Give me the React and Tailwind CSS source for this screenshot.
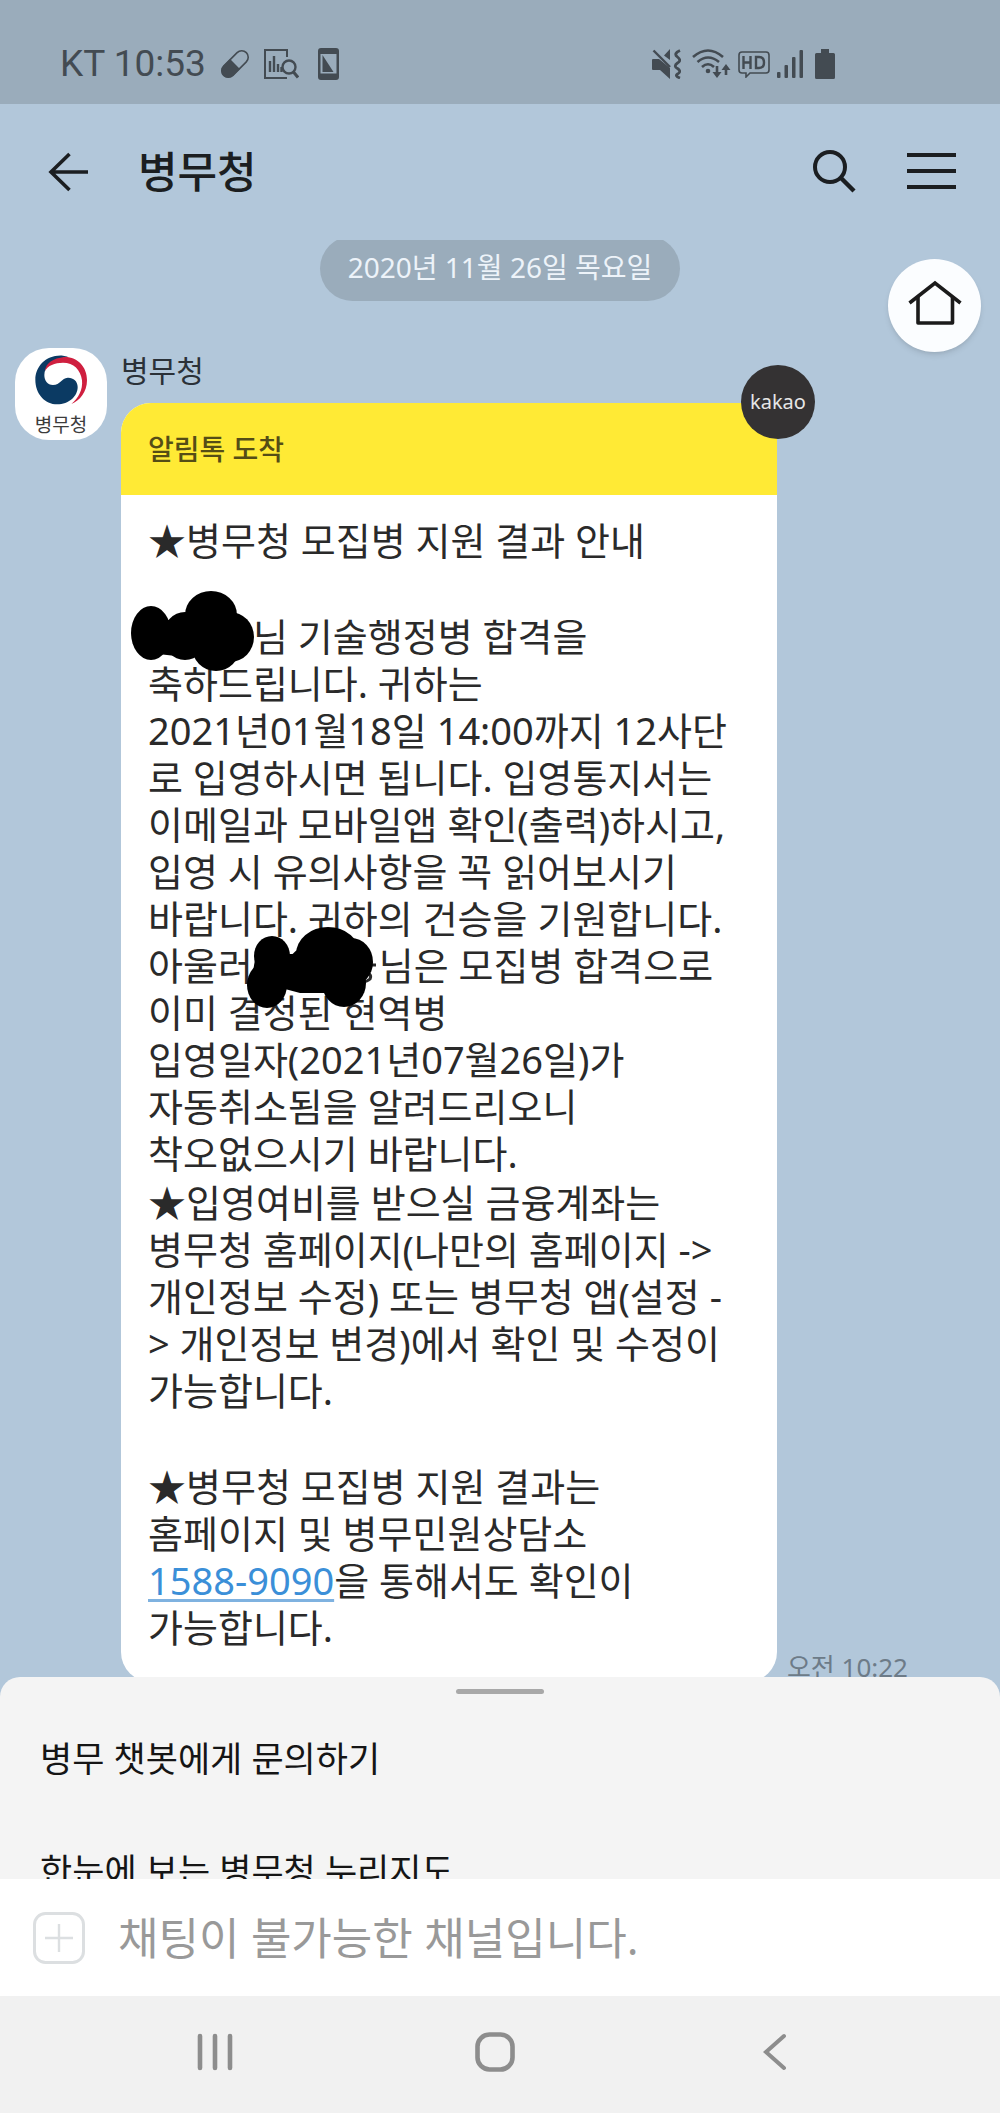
import React from 'react';

const NoticeLines = ({ lines }) =>
  lines.map((line, i) => (
    <React.Fragment key={i}>
      {i > 0 && <br />}
      {line}
    </React.Fragment>
  ));

// Black marker scribble over a name
const NameMark = () => (
  <span className="relative inline-block h-8 w-[105px] align-middle">
    <svg className="absolute -left-[18px] -top-[36px] max-w-none" width="128" height="86" viewBox="130 587 128 86">
      <g>
        <ellipse cx="151" cy="631" rx="20" ry="27" />
        <ellipse cx="211" cy="613" rx="26" ry="24" />
        <ellipse cx="230" cy="635" rx="24" ry="25" />
        <ellipse cx="185" cy="634" rx="22" ry="24" />
        <ellipse cx="216" cy="645" rx="24" ry="24" />
        <path d="M160 618 H230 V655 H185 L158 652 Z" />
      </g>
    </svg>
  </span>
);

const SecondNameMark = () => (
  <span className="relative inline-block h-8 w-[116px] align-middle">
    <svg className="absolute -left-[18px] -top-[29px] max-w-none" width="132" height="86" viewBox="245 926 132 86">
      <path d="M362 972 Q373 974 370 980 Q366 984 358 982 M366 966 H376" fill="none" stroke="#2a2a2a" strokeWidth="3" />
      <g>
        <ellipse cx="272" cy="957" rx="18" ry="20" />
        <ellipse cx="267" cy="986" rx="20" ry="23" />
        <ellipse cx="328" cy="955" rx="32" ry="27" />
        <ellipse cx="351" cy="963" rx="22" ry="24" />
        <ellipse cx="307" cy="971" rx="20" ry="23" />
        <ellipse cx="344" cy="984" rx="22" ry="24" />
        <path d="M256 955 H360 V985 L325 994 H300 L285 990 L252 978 Z" />
      </g>
    </svg>
  </span>
);

const introLines = [
  <><NameMark />님 기술행정병 합격을</>,
  '축하드립니다. 귀하는',
  '2021년01월18일 14:00까지 12사단',
  '로 입영하시면 됩니다. 입영통지서는',
  '이메일과 모바일앱 확인(출력)하시고,',
  '입영 시 유의사항을 꼭 읽어보시기',
  '바랍니다. 귀하의 건승을 기원합니다.',
  <>아울러 <SecondNameMark />님은 모집병 합격으로</>,
  '이미 결정된 현역병',
  '입영일자(2021년07월26일)가',
  '자동취소됨을 알려드리오니',
  '착오없으시기 바랍니다.',
];

const accountLines = [
  '★입영여비를 받으실 금융계좌는',
  '병무청 홈페이지(나만의 홈페이지 ->',
  '개인정보 수정) 또는 병무청 앱(설정 -',
  '> 개인정보 변경)에서 확인 및 수정이',
  '가능합니다.',
];

const contactLines = [
  '★병무청 모집병 지원 결과는',
  '홈페이지 및 병무민원상담소',
  <>
    <a href="tel:1588-9090" className="text-[#3b8fd8] underline decoration-[#7fb2e0] decoration-3 underline-offset-4">1588-9090</a>
    을 통해서도 확인이
  </>,
  '가능합니다.',
];

const StatusBar = () => (
  <div className="flex h-[104px] items-center justify-between bg-[#9aacbb] pl-[60px] pr-[165px] pt-[24px] text-[#434b52]">
    <div className="flex items-center">
      <span className="font-[Roboto,sans-serif] text-[37px] leading-[40px]">KT 10:53</span>
      <svg className="ml-[14px]" width="30" height="30" viewBox="0 0 30 30">
        <g transform="rotate(-45 15 15)">
          <rect x="-1" y="8.5" width="32" height="13" rx="6.5" fill="none" stroke="currentColor" strokeWidth="1.6" />
          <path d="M15 8 H5.500 A7 7 0 0 0 5.500 22 H15 Z" fill="currentColor" />
        </g>
      </svg>
      <svg className="ml-[14px]" width="35" height="30" viewBox="0 0 35 30" fill="none" stroke="currentColor">
        <path d="M23 8 V1 H1 V29 H23" strokeWidth="2" />
        <path d="M6 12 V23 M10 7 V23 M14 15 V23 M17.500 18 V23" strokeWidth="2.4" />
        <circle cx="25" cy="18" r="6.500" strokeWidth="2.4" />
        <path d="M29.500 23 L34 28.500" strokeWidth="3" />
      </svg>
      <svg className="ml-[19px]" width="21" height="32" viewBox="0 0 21 32">
        <path fillRule="evenodd" d="M3 0 H18 Q21 0 21 3 V29 Q21 32 18 32 H3 Q0 32 0 29 V3 Q0 0 3 0 Z M2.500 6 V25.500 H18.500 V6 Z" fill="currentColor" />
        <path d="M4.500 7 L15.500 24 H4.500 Z" fill="currentColor" />
      </svg>
    </div>
    <div className="flex items-center">
      <svg width="29" height="30" viewBox="0 0 29 30">
        <path d="M0 11 Q0 10 1 10 H7 L18 19 V30 L8 21 H1 Q0 21 0 20 Z M12 6.500 L18 0 V11 Z" fill="currentColor" />
        <path d="M1.500 1.500 L18 18" fill="none" stroke="currentColor" strokeWidth="2.4" />
        <path d="M28 1.500 Q21 4.500 25.500 8 Q30 11.500 25.500 14 Q21 17 25.500 19.500 Q30 22.500 25.500 25 Q22.500 27 28 29" fill="none" stroke="currentColor" strokeWidth="2.8" />
      </svg>
      <svg className="ml-[11px]" width="39" height="30" viewBox="0 0 39 30" fill="none" stroke="currentColor" strokeWidth="2.6">
        <path d="M1 8 Q16 -5 31 8 M5.500 13 Q16 4 27 13 M10 18 Q16 12.500 22 18" />
        <circle cx="16" cy="22" r="2.300" fill="currentColor" stroke="none" />
        <path d="M25 17 V25 M34 26 V20" />
        <path d="M20.500 23 H29.500 L25 29 Z M29.500 21 H38.500 L34 15 Z" fill="currentColor" stroke="none" />
      </svg>
      <svg className="ml-[7px]" width="32" height="27" viewBox="0 0 32 27">
        <path d="M4 1 H28 Q31 1 31 4 V19 Q31 22 28 22 H12 L8 26 V22 H4 Q1 22 1 19 V4 Q1 1 4 1 Z" fill="none" stroke="currentColor" strokeWidth="1.6" />
        <path d="M5.500 5 V18 M12.500 5 V18 M5.500 11.500 H12.500 M18 6 V17 H21 Q26 17 26 11.500 Q26 6 21 6 Z" fill="none" stroke="currentColor" strokeWidth="2.4" />
      </svg>
      <svg className="ml-[7px]" width="27" height="28" viewBox="0 0 27 28" fill="currentColor">
        <rect x="0" y="22" width="3.500" height="6" rx="1" />
        <rect x="7.500" y="15" width="3.500" height="13" rx="1" />
        <rect x="15" y="7" width="3.500" height="21" rx="1" />
        <rect x="22.500" y="0" width="3.500" height="28" rx="1" />
      </svg>
      <svg className="ml-[11px]" width="20" height="30" viewBox="0 0 20 30" fill="currentColor">
        <path d="M6 0 H14 V4 H18.500 Q20 4 20 5.500 V28.500 Q20 30 18.500 30 H1.500 Q0 30 0 28.500 V5.500 Q0 4 1.500 4 H6 Z" />
      </svg>
    </div>
  </div>
);

const ChatHeader = () => (
  <header className="flex h-[136px] items-center px-[44px] text-[#1b1e21]">
    <button aria-label="뒤로">
      <svg width="44" height="44" viewBox="0 0 44 44" fill="none" stroke="currentColor" strokeWidth="3.600">
        <path d="M44 22 H7 M25.500 4 L7 22 L25.500 40" />
      </svg>
    </button>
    <h1 className="ml-[50px] flex-1 text-[43px] font-medium leading-[48px]">병무청</h1>
    <button aria-label="검색">
      <svg width="44" height="44" viewBox="0 0 44 44" fill="none" stroke="currentColor">
        <circle cx="17" cy="17" r="15" strokeWidth="4" />
        <path d="M27.500 27.500 L41 41" strokeWidth="4.400" />
      </svg>
    </button>
    <button aria-label="메뉴" className="ml-[50px]">
      <svg width="49" height="38" viewBox="0 0 49 38" stroke="currentColor" strokeWidth="4">
        <path d="M0 2 H49 M0 18 H49 M0 34 H49" />
      </svg>
    </button>
  </header>
);

const Avatar = () => (
  <div className="flex h-[92px] w-[92px] shrink-0 flex-col items-center rounded-[34px] bg-white pt-[7px]">
    <svg width="54" height="50" viewBox="104 74 160 150">
      <path d="M190 76 C140 72 107 108 107 148 C107 190 135 222 173 222 C207 222 234 198 234 170 C234 152 220 141 204 142 C186 143 182 164 160 164 C143 164 134 150 134 134 C134 108 156 88 205 79 Z" fill="#0b3a63" />
      <path d="M136 122 C138 98 160 84 194 80 C234 79 262 110 262 150 C262 185 240 212 215 221 C236 205 250 178 247 150 C243 118 222 97 190 97 C165 97 144 106 136 122 Z" fill="#cf1f3f" />
    </svg>
    <span className="mt-[8px] text-[19px] leading-[24px] text-[#3c3c3c]">병무청</span>
  </div>
);

const App = () => {
  return (
    <div className="flex min-h-screen flex-col bg-[#b2c7da] font-['Noto_Sans','Noto_Sans_CJK_KR',sans-serif]">
      <StatusBar />
      <ChatHeader />

      <main className="relative flex-1 overflow-hidden pb-6">
        <div className="flex justify-center">
          <p className="-mt-1 rounded-full bg-[#9aacbb] px-[28px] pb-[14px] pt-[11px] text-[28px] leading-[40px] text-[#edf3f9]">
            2020년 11월 26일 목요일
          </p>
        </div>
        <button aria-label="채널 홈" className="absolute right-[19px] top-[19px] flex h-[93px] w-[93px] items-center justify-center rounded-full bg-[#fbfdff] pb-[6px] shadow-md">
          <svg width="54" height="46" viewBox="0 0 54 46" fill="none" stroke="#1b1b1b" strokeWidth="3.600">
            <path d="M1.500 23 L27 3 L52.500 23" />
            <path d="M10 17 V43 H44.500 V17" strokeLinejoin="round" />
          </svg>
        </button>

        <div className="mt-[47px] flex gap-[14px] pl-[15px] pr-[92px]">
          <Avatar />
          <div className="flex-1 pt-[3px]">
            <p className="mb-3 text-[30px] leading-[40px] text-[#2b3138]">병무청</p>
            <div className="flex items-end gap-[10px]">
              <article className="relative flex-1 rounded-[30px] bg-white text-[#2a2a2a]">
                <h2 className="flex h-[92px] items-center rounded-t-[30px] bg-[#ffea35] px-[27px] text-[28px] font-medium text-[#554d16]">알림톡 도착</h2>
                <span className="absolute -right-[38px] -top-[38px] flex h-[74px] w-[74px] items-center justify-center rounded-full bg-[#343233] text-[20px] text-[#e6e6e6]">
                  kakao
                </span>
                <div className="whitespace-nowrap px-[27px] pb-[31px] pt-[22px] text-[38px] leading-[47px]">
                  <p>★병무청 모집병 지원 결과 안내</p>
                  <p className="mt-[49px]"><NoticeLines lines={introLines} /></p>
                  <p className="mt-[2px]"><NoticeLines lines={accountLines} /></p>
                  <p className="mt-[49px]"><NoticeLines lines={contactLines} /></p>
                </div>
              </article>
              <time className="whitespace-nowrap pb-[2px] text-[26px] leading-[26px] text-[#6d7b88]">오전 10:22</time>
            </div>
          </div>
        </div>
      </main>

      <section className="relative -mt-[29px] h-[202px] overflow-hidden rounded-t-[20px] bg-[#f4f4f4] text-[#151515]">
        <div className="mx-auto mt-[12px] h-[5px] w-[88px] rounded-full bg-[#a8a8a8]" />
        <ul className="mt-[9px] text-[35px] leading-[112px]">
          <li><button className="w-full px-[40px] text-left">병무 챗봇에게 문의하기</button></li>
          <li><button className="w-full px-[40px] text-left">한눈에 보는 병무청 누리지도</button></li>
        </ul>
      </section>

      <div className="flex h-[117px] items-center bg-white px-[33px]">
        <button aria-label="추가" className="text-[#dcdfe1]">
          <svg width="52" height="52" viewBox="0 0 52 52" fill="none" stroke="currentColor" strokeWidth="3">
            <rect x="1.500" y="1.500" width="49" height="49" rx="11" />
            <path d="M26 12 V40 M12 26 H40" strokeWidth="2.400" />
          </svg>
        </button>
        <input
          disabled
          aria-label="메시지 입력"
          placeholder="채팅이 불가능한 채널입니다."
          className="ml-[33px] min-w-0 flex-1 bg-transparent text-[44px] leading-[60px] placeholder:text-[#999999]"
        />
      </div>

      <nav className="grid h-[117px] grid-cols-3 items-center justify-items-center bg-[#f1f1f1] pb-[6px] pl-[75px] pr-[85px] text-[#8d8d8d]">
        <button aria-label="최근 앱">
          <svg width="36" height="38" viewBox="0 0 36 38" stroke="currentColor" strokeWidth="4.600" strokeLinecap="round">
            <path d="M3 3 V35 M18 3 V35 M33 3 V35" />
          </svg>
        </button>
        <button aria-label="홈">
          <svg width="40" height="40" viewBox="0 0 40 40" fill="none" stroke="currentColor" strokeWidth="4.600">
            <rect x="2.500" y="2.500" width="35" height="35" rx="12" />
          </svg>
        </button>
        <button aria-label="이전">
          <svg width="24" height="38" viewBox="0 0 24 38" fill="none" stroke="currentColor" strokeWidth="4" strokeLinecap="round">
            <path d="M21 3 L3 19 L21 35" />
          </svg>
        </button>
      </nav>
    </div>
  );
};

export default App;
